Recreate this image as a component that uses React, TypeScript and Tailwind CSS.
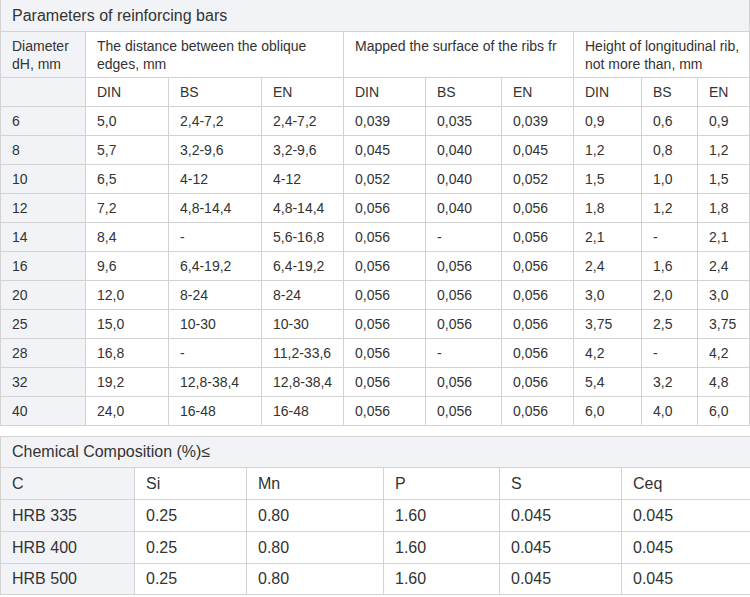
const bars: string[][] = [
  ["6", "5,0", "2,4-7,2", "2,4-7,2", "0,039", "0,035", "0,039", "0,9", "0,6", "0,9"],
  ["8", "5,7", "3,2-9,6", "3,2-9,6", "0,045", "0,040", "0,045", "1,2", "0,8", "1,2"],
  ["10", "6,5", "4-12", "4-12", "0,052", "0,040", "0,052", "1,5", "1,0", "1,5"],
  ["12", "7,2", "4,8-14,4", "4,8-14,4", "0,056", "0,040", "0,056", "1,8", "1,2", "1,8"],
  ["14", "8,4", "-", "5,6-16,8", "0,056", "-", "0,056", "2,1", "-", "2,1"],
  ["16", "9,6", "6,4-19,2", "6,4-19,2", "0,056", "0,056", "0,056", "2,4", "1,6", "2,4"],
  ["20", "12,0", "8-24", "8-24", "0,056", "0,056", "0,056", "3,0", "2,0", "3,0"],
  ["25", "15,0", "10-30", "10-30", "0,056", "0,056", "0,056", "3,75", "2,5", "3,75"],
  ["28", "16,8", "-", "11,2-33,6", "0,056", "-", "0,056", "4,2", "-", "4,2"],
  ["32", "19,2", "12,8-38,4", "12,8-38,4", "0,056", "0,056", "0,056", "5,4", "3,2", "4,8"],
  ["40", "24,0", "16-48", "16-48", "0,056", "0,056", "0,056", "6,0", "4,0", "6,0"],
]

const chem: string[][] = [
  ["HRB 335", "0.25", "0.80", "1.60", "0.045", "0.045"],
  ["HRB 400", "0.25", "0.80", "1.60", "0.045", "0.045"],
  ["HRB 500", "0.25", "0.80", "1.60", "0.045", "0.045"],
]

const barCols = [85, 83, 93, 82, 82, 76, 72, 68, 56, 52]
const chemCols = [134, 112, 137, 116, 122, 129]

const cell = "border border-[#d3d3d3] pl-[11px] pr-[2px] py-0 text-left align-middle font-normal whitespace-normal"
const gray = "bg-[#f2f3f6]"

export default function App() {
  return (
    <div className="w-[750px] bg-white text-[#333] font-['Liberation_Sans',Arial,sans-serif]">
      <table className="-mt-px w-[750px] table-fixed border-collapse text-[14px] leading-[18px]">
        <colgroup>
          {barCols.map((w, i) => (
            <col key={i} style={{ width: w }} />
          ))}
        </colgroup>
        <tbody>
          <tr className="h-[32px]">
            <td colSpan={10} className={`${cell} ${gray} text-[16px]`}>
              Parameters of reinforcing bars
            </td>
          </tr>
          <tr className="h-[46px]">
            <td className={`${cell} ${gray}`}>Diameter dH, mm</td>
            <td colSpan={3} className={cell}>The distance between the oblique edges, mm</td>
            <td colSpan={3} className={`${cell} align-top pt-[5px]`}>Mapped the surface of the ribs fr</td>
            <td colSpan={3} className={cell}>Height of longitudinal rib, not more than, mm</td>
          </tr>
          <tr className="h-[29px]">
            <td className={`${cell} ${gray}`}></td>
            {["DIN", "BS", "EN", "DIN", "BS", "EN", "DIN", "BS", "EN"].map((h, i) => (
              <td key={i} className={cell}>
                {h}
              </td>
            ))}
          </tr>
          {bars.map((row) => (
            <tr key={row[0]} className="h-[29px]">
              {row.map((v, i) => (
                <td key={i} className={i === 0 ? `${cell} ${gray}` : cell}>
                  {v}
                </td>
              ))}
            </tr>
          ))}
        </tbody>
      </table>

      <table className="mt-[10px] w-[750px] table-fixed border-collapse text-[16px] leading-[20px]">
        <colgroup>
          {chemCols.map((w, i) => (
            <col key={i} style={{ width: w }} />
          ))}
        </colgroup>
        <tbody>
          <tr className="h-[31px]">
            <td colSpan={6} className={`${cell} ${gray}`}>
              Chemical Composition (%)≤
            </td>
          </tr>
          <tr className="h-[32px]">
            {["C", "Si", "Mn", "P", "S", "Ceq"].map((h, i) => (
              <td key={i} className={i === 0 ? `${cell} ${gray}` : cell}>
                {h}
              </td>
            ))}
          </tr>
          {chem.map((row, r) => (
            <tr key={row[0]} className={r === 2 ? "h-[31px]" : "h-[32px]"}>
              {row.map((v, i) => (
                <td key={i} className={i === 0 ? `${cell} ${gray}` : cell}>
                  {v}
                </td>
              ))}
            </tr>
          ))}
        </tbody>
      </table>
    </div>
  )
}
